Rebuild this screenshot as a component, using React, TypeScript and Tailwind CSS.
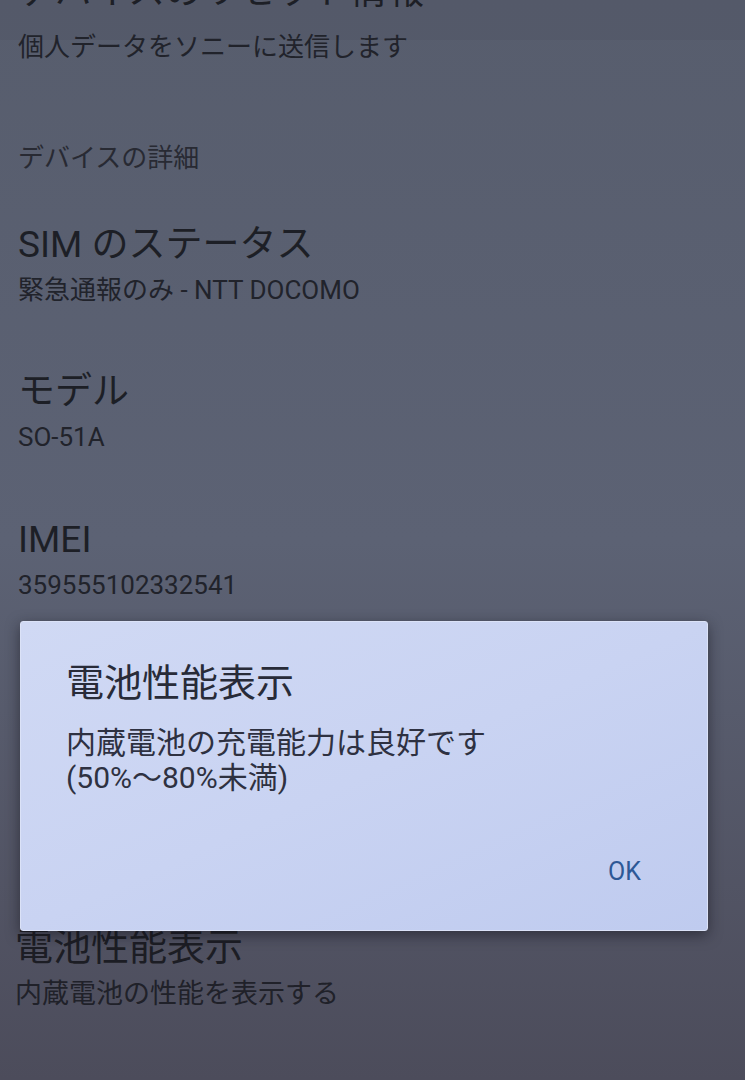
const font = { fontFamily: '"Roboto", "Noto Sans CJK JP", sans-serif' };

function Item({ title, sub, top }: { title: string; sub: string; top: string }) {
  return (
    <div className={top}>
      <div className="text-[37px] leading-[44px] text-[#1d1f26]">{title}</div>
      <div className="mt-[6px] text-[26px] leading-[34px] text-[#21232b]">{sub}</div>
    </div>
  );
}

export default function App() {
  return (
    <div
      style={font}
      className="relative w-[745px] h-[1080px] overflow-hidden bg-gradient-to-b from-[#575d6d] via-[#5c6274] to-[#4c4c5b]"
    >
      <div className="absolute inset-x-0 top-0 h-[40px] bg-[#4f5565]/40" />

      <div className="relative flex flex-col pl-[18px]">
        <div className="-mt-[30px] text-[37px] leading-[44px] text-[#1d1f26]">デバイスのリセット情報</div>
        <div className="mt-[16px] text-[26px] leading-[34px] text-[#21232b]">個人データをソニーに送信します</div>

        <div className="mt-[77px] text-[26px] leading-[34px] text-[#282a33]">デバイスの詳細</div>

        <Item top="mt-[48px]" title="SIM のステータス" sub="緊急通報のみ - NTT DOCOMO" />
        <Item top="mt-[63px]" title="モデル" sub="SO-51A" />
        <Item top="mt-[64px]" title="IMEI" sub="359555102332541" />

        <div className="mt-[323px] -ml-[3px] text-[38px] leading-[44px] text-[#1c1d24]">電池性能表示</div>
        <div className="mt-[8px] -ml-[3px] text-[27px] leading-[34px] text-[#202129]">内蔵電池の性能を表示する</div>
      </div>

      {/* dialog */}
      <div className="absolute left-[20px] top-[621px] w-[688px] h-[310px] rounded-[3px] bg-gradient-to-br from-[#d0d9f4] via-[#c9d3f2] to-[#bfcbef] border border-[#dbe2f7] shadow-[0_4px_14px_rgba(20,20,30,0.55)]">
        <div className="flex flex-col h-full pl-[45px] pr-[66px]">
          <div className="mt-[39px] text-[38px] leading-[44px] text-[#282b38]">電池性能表示</div>
          <div className="mt-[20px] text-[30px] leading-[35px] text-[#2e3141]">
            <div>内蔵電池の充電能力は良好です</div>
            <div>(50%〜80%未満)</div>
          </div>
          <div className="mt-auto mb-[43px] self-end text-[25px] leading-[30px] text-[#2d5896]">OK</div>
        </div>
      </div>
    </div>
  );
}
